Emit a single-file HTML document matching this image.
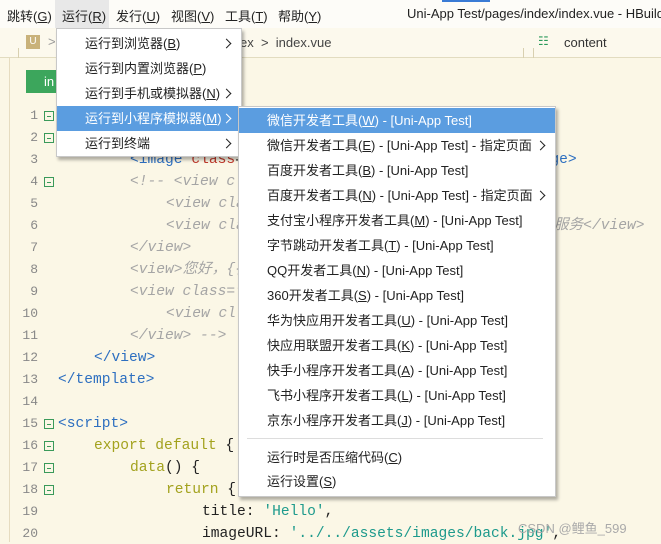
<!DOCTYPE html>
<html><head><meta charset="utf-8"><style>
*{margin:0;padding:0;box-sizing:border-box}
body{width:661px;height:542px;overflow:hidden;background:#fbf7e6;font-family:"Liberation Sans","Noto Sans CJK SC",sans-serif;position:relative;font-size:13px;color:#222}
.abs{position:absolute;white-space:nowrap}
#menubar{position:absolute;left:0;top:0;width:661px;height:28px;background:#fdfcf8;overflow:hidden}
#menubar span{position:absolute;top:6px;font-size:13px;white-space:nowrap}
#tool{position:absolute;left:0;top:28px;width:661px;height:30px;background:#fcf9ed;border-bottom:1px solid #e2dcc0}
.ln{position:absolute;left:0;width:38px;text-align:right;font-family:"Liberation Mono",monospace;font-size:13px;color:#888;line-height:18px}
.fold{position:absolute;left:44px;width:10px;height:10px;border:1px solid #3a9a5a;font-size:0}
.fold:after{content:"";position:absolute;left:2px;top:4px;width:4px;height:1px;background:#3a9a5a}
.code{position:absolute;white-space:pre;font-family:"Liberation Mono","Noto Sans CJK SC",monospace;font-size:14.6px;line-height:20px;height:20px}
.t{color:#2d6fc0}.c{color:#a5a5a5;font-style:italic}.k{color:#a3a21e}.s{color:#1d9a8c}.r{color:#c0392b}
.menu{position:absolute;background:#fff;border:1px solid #c8c8c8;box-shadow:2px 3px 3px rgba(0,0,0,.3)}
.mi{position:absolute;left:0;right:0;height:25px;line-height:25px;font-size:13px;white-space:nowrap}
.mi.h{background:#5b9de0;color:#fff}
.arr{position:absolute;top:9px;width:7px;height:7px;border-right:1.6px solid #222;border-top:1.6px solid #222;transform:rotate(45deg)}
.h .arr{border-color:#fff}
u{text-decoration:underline}
</style></head><body>
<div id="menubar">
<span style="left:7px">跳转(<u>G</u>)</span>
<div style="position:absolute;left:55px;top:0;width:54px;height:28px;background:#e8e8e8"></div>
<span style="left:62px">运行(<u>R</u>)</span>
<span style="left:116px">发行(<u>U</u>)</span>
<span style="left:171px">视图(<u>V</u>)</span>
<span style="left:225px">工具(<u>T</u>)</span>
<span style="left:278px">帮助(<u>Y</u>)</span>
<span style="left:407px">Uni-App Test/pages/index/index.vue - HBuilder X</span>
<div style="position:absolute;left:442px;top:0;width:48px;height:2px;background:#3a7bd5"></div>
</div>
<div id="tool">
<div class="abs" style="left:26px;top:7px;width:14px;height:14px;background:#c9b27a;color:#fff;font-size:10px;text-align:center;line-height:14px">U</div>
<span class="abs" style="left:48px;top:6px;color:#999">&gt;</span>
<span class="abs" style="left:240px;top:7px;color:#444">ex &nbsp;&gt; &nbsp;index.vue</span>
<div class="abs" style="left:18px;top:20px;width:176px;height:10px;border-left:1px solid #d8d0b0"></div>
<div class="abs" style="left:523px;top:20px;height:10px;border-left:1px solid #d8d0b0"></div>
<div class="abs" style="left:533px;top:20px;height:10px;border-left:1px solid #d8d0b0"></div>
<span class="abs" style="left:538px;top:6px;color:#2a9a5a;font-size:12px">☷</span>
<span class="abs" style="left:564px;top:7px;color:#333">content</span>
</div>
<div class="abs" style="left:9px;top:58px;width:1px;height:484px;background:#e6dcc0"></div>
<div class="abs" style="left:26px;top:70px;width:30px;height:23px;background:#3ca65c;color:#fff;padding:4px 0 0 18px">in</div>

<div class="ln" style="top:107px">1</div><div class="fold" style="top:111px"></div>
<div class="ln" style="top:129px">2</div><div class="fold" style="top:133px"></div>
<div class="ln" style="top:151px">3</div>
<div class="ln" style="top:173px">4</div><div class="fold" style="top:177px"></div>
<div class="ln" style="top:195px">5</div>
<div class="ln" style="top:217px">6</div>
<div class="ln" style="top:239px">7</div>
<div class="ln" style="top:261px">8</div>
<div class="ln" style="top:283px">9</div>
<div class="ln" style="top:305px">10</div>
<div class="ln" style="top:327px">11</div>
<div class="ln" style="top:349px">12</div>
<div class="ln" style="top:371px">13</div>
<div class="ln" style="top:393px">14</div>
<div class="ln" style="top:415px">15</div><div class="fold" style="top:419px"></div>
<div class="ln" style="top:437px">16</div><div class="fold" style="top:441px"></div>
<div class="ln" style="top:459px">17</div><div class="fold" style="top:463px"></div>
<div class="ln" style="top:481px">18</div><div class="fold" style="top:485px"></div>
<div class="ln" style="top:503px">19</div>
<div class="ln" style="top:525px">20</div>

<div class="code" style="left:58px;top:106px"><span class="t">&lt;template&gt;</span></div>
<div class="code" style="left:94px;top:128px"><span class="t">&lt;view </span><span class="r">class</span>=<span class="s">"content"</span><span class="t">&gt;</span></div>
<div class="code" style="left:130px;top:150px"><span class="t">&lt;image </span><span class="r">class</span>=<span class="s">"logo" src="/static/logo.</span><span class="t">png"&gt;&lt;/image&gt;</span></div>
<div class="code c" style="left:130px;top:172px">&lt;!-- &lt;view class="text-area"&gt;</div>
<div class="code c" style="left:166px;top:194px">&lt;view class="title"&gt;</div>
<div class="code c" style="left:166px;top:216px">&lt;view class="title"&gt;</div>
<div class="code c" style="left:554px;top:216px">服务&lt;/view&gt;</div>
<div class="code c" style="left:130px;top:238px">&lt;/view&gt;</div>
<div class="code c" style="left:130px;top:260px">&lt;view&gt;您好，{{</div>
<div class="code c" style="left:130px;top:282px">&lt;view class="</div>
<div class="code c" style="left:166px;top:304px">&lt;view cl</div>
<div class="code c" style="left:130px;top:326px">&lt;/view&gt; --&gt;</div>
<div class="code t" style="left:94px;top:348px">&lt;/view&gt;</div>
<div class="code t" style="left:58px;top:370px">&lt;/template&gt;</div>
<div class="code t" style="left:58px;top:414px">&lt;script&gt;</div>
<div class="code" style="left:94px;top:436px"><span class="k">export default</span> {</div>
<div class="code" style="left:130px;top:458px"><span class="k">data</span>() {</div>
<div class="code" style="left:166px;top:480px"><span class="k">return</span> {</div>
<div class="code" style="left:202px;top:502px">title: <span class="s">'Hello'</span>,</div>
<div class="code" style="left:202px;top:524px">imageURL: <span class="s">'../../assets/images/back.jpg'</span>,</div>
<div class="abs" style="left:518px;top:518px;color:#aaa;font-size:13px">CSDN @鲤鱼_599</div>

<div class="menu" style="left:56px;top:28px;width:186px;height:129px">
<div class="mi" style="top:2px;padding-left:28px">运行到浏览器(<u>B</u>)<span class="arr" style="left:166px"></span></div>
<div class="mi" style="top:27px;padding-left:28px">运行到内置浏览器(<u>P</u>)</div>
<div class="mi" style="top:52px;padding-left:28px">运行到手机或模拟器(<u>N</u>)<span class="arr" style="left:166px"></span></div>
<div class="mi h" style="top:77px;padding-left:28px">运行到小程序模拟器(<u>M</u>)<span class="arr" style="left:166px"></span></div>
<div class="mi" style="top:102px;padding-left:28px">运行到终端<span class="arr" style="left:166px"></span></div>
</div>

<div class="menu" style="left:238px;top:106px;width:318px;height:391px">
<div class="mi h" style="top:1px;padding-left:28px">微信开发者工具(<u>W</u>) - [Uni-App Test]</div>
<div class="mi" style="top:26px;padding-left:28px">微信开发者工具(<u>E</u>) - [Uni-App Test] - 指定页面<span class="arr" style="left:298px"></span></div>
<div class="mi" style="top:51px;padding-left:28px">百度开发者工具(<u>B</u>) - [Uni-App Test]</div>
<div class="mi" style="top:76px;padding-left:28px">百度开发者工具(<u>N</u>) - [Uni-App Test] - 指定页面<span class="arr" style="left:298px"></span></div>
<div class="mi" style="top:101px;padding-left:28px">支付宝小程序开发者工具(<u>M</u>) - [Uni-App Test]</div>
<div class="mi" style="top:126px;padding-left:28px">字节跳动开发者工具(<u>T</u>) - [Uni-App Test]</div>
<div class="mi" style="top:151px;padding-left:28px">QQ开发者工具(<u>N</u>) - [Uni-App Test]</div>
<div class="mi" style="top:176px;padding-left:28px">360开发者工具(<u>S</u>) - [Uni-App Test]</div>
<div class="mi" style="top:201px;padding-left:28px">华为快应用开发者工具(<u>U</u>) - [Uni-App Test]</div>
<div class="mi" style="top:226px;padding-left:28px">快应用联盟开发者工具(<u>K</u>) - [Uni-App Test]</div>
<div class="mi" style="top:251px;padding-left:28px">快手小程序开发者工具(<u>A</u>) - [Uni-App Test]</div>
<div class="mi" style="top:276px;padding-left:28px">飞书小程序开发者工具(<u>L</u>) - [Uni-App Test]</div>
<div class="mi" style="top:301px;padding-left:28px">京东小程序开发者工具(<u>J</u>) - [Uni-App Test]</div>
<div class="abs" style="left:8px;top:331px;width:296px;height:1px;background:#ddd"></div>
<div class="mi" style="top:338px;padding-left:28px">运行时是否压缩代码(<u>C</u>)</div>
<div class="mi" style="top:362px;padding-left:28px">运行设置(<u>S</u>)</div>
</div>
</body></html>
